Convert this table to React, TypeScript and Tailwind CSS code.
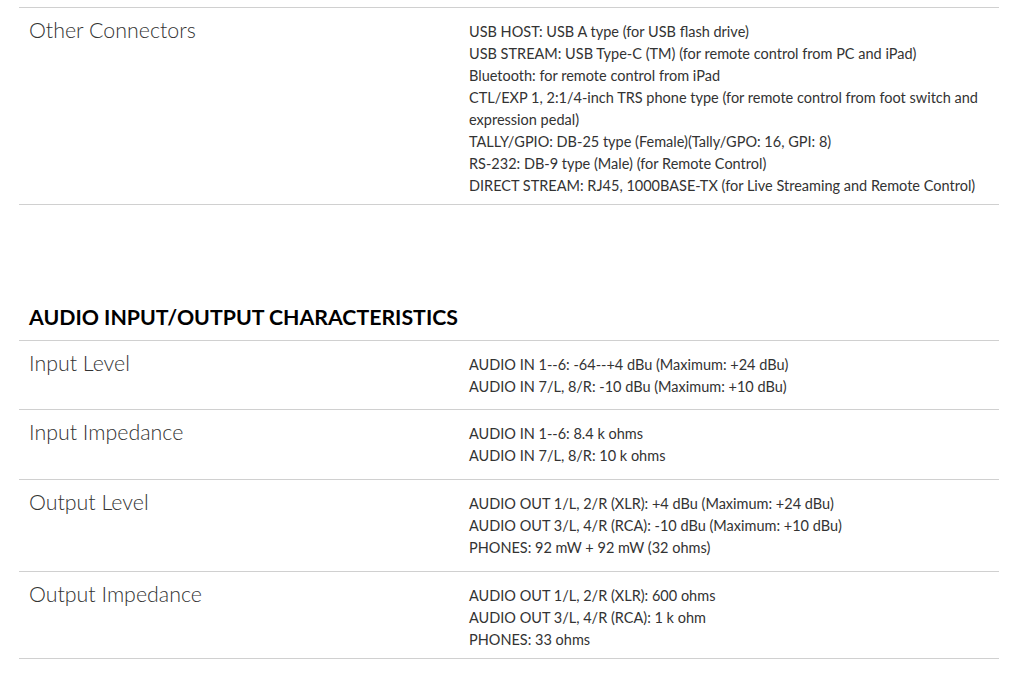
const otherConnectors = [
  'USB HOST: USB A type (for USB flash drive)',
  'USB STREAM: USB Type-C (TM) (for remote control from PC and iPad)',
  'Bluetooth: for remote control from iPad',
  'CTL/EXP 1, 2:1/4-inch TRS phone type (for remote control from foot switch and expression pedal)',
  'TALLY/GPIO: DB-25 type (Female)(Tally/GPO: 16, GPI: 8)',
  'RS-232: DB-9 type (Male) (for Remote Control)',
  'DIRECT STREAM: RJ45, 1000BASE-TX (for Live Streaming and Remote Control)',
];

type Row = { label: string; values: string[]; pb: string };

const audioRows: Row[] = [
  {
    label: 'Input Level',
    values: ['AUDIO IN 1--6: -64--+4 dBu (Maximum: +24 dBu)', 'AUDIO IN 7/L, 8/R: -10 dBu (Maximum: +10 dBu)'],
    pb: 'pb-[11px]',
  },
  {
    label: 'Input Impedance',
    values: ['AUDIO IN 1--6: 8.4 k ohms', 'AUDIO IN 7/L, 8/R: 10 k ohms'],
    pb: 'pb-[12px]',
  },
  {
    label: 'Output Level',
    values: [
      'AUDIO OUT 1/L, 2/R (XLR): +4 dBu (Maximum: +24 dBu)',
      'AUDIO OUT 3/L, 4/R (RCA): -10 dBu (Maximum: +10 dBu)',
      'PHONES: 92 mW + 92 mW (32 ohms)',
    ],
    pb: 'pb-[12px]',
  },
  {
    label: 'Output Impedance',
    values: ['AUDIO OUT 1/L, 2/R (XLR): 600 ohms', 'AUDIO OUT 3/L, 4/R (RCA): 1 k ohm', 'PHONES: 33 ohms'],
    pb: 'pb-[7px]',
  },
];

function SpecRow({ label, values, pb }: Row) {
  return (
    <div className={`flex border-b border-[#d0d0d0] pt-[13px] ${pb}`}>
      <div className="w-[450px] shrink-0 pl-[10px] text-[21.4px] font-light leading-[18px] text-[#333]">
        {label}
      </div>
      <div className="flex-1 pr-[10px] text-[14.5px] leading-[22px] text-[#333]">
        {values.map((v) => (
          <p key={v}>{v}</p>
        ))}
      </div>
    </div>
  );
}

export default function App() {
  return (
    <div className="min-h-[685px] bg-white pl-[19px] pr-[30px] pt-[7px] [font-family:'Lato','Open_Sans',sans-serif]">
      <div className="border-t border-[#d0d0d0]">
        <SpecRow label="Other Connectors" values={otherConnectors} pb="pb-[7px]" />
      </div>

      <h2 className="mt-[99px] pl-[10px] pb-[10px] text-[21.3px] font-bold uppercase leading-[26px] text-black">
        Audio Input/Output Characteristics
      </h2>
      <div className="border-t border-[#d0d0d0]">
        {audioRows.map((r) => (
          <SpecRow key={r.label} {...r} />
        ))}
      </div>
    </div>
  );
}
